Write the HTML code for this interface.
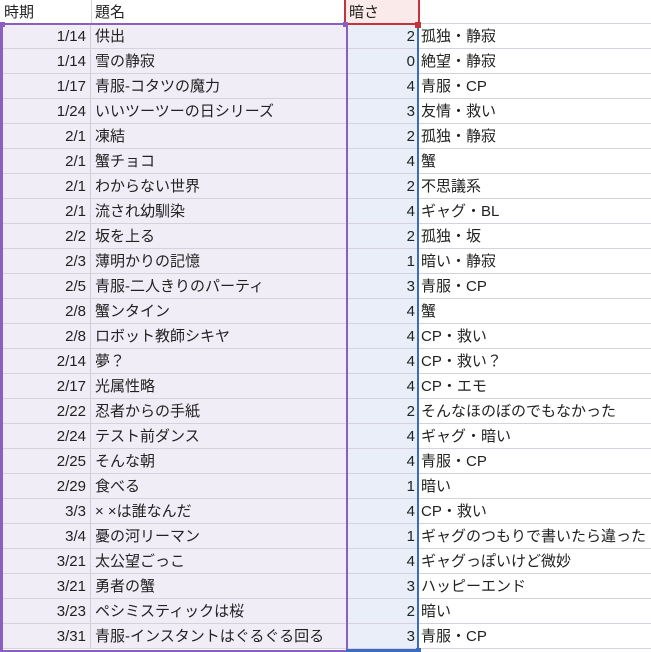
<!DOCTYPE html><html><head><meta charset="utf-8"><style>
*{margin:0;padding:0;box-sizing:border-box}
body{width:651px;height:652px;background:#fff;position:relative;overflow:hidden;font-family:"Liberation Sans","Noto Sans CJK JP",sans-serif;font-size:15px;color:#222}
.r{position:absolute;left:0;width:651px;height:25px;border-bottom:1px solid #d4d2dc}
.r div{position:absolute;top:0;height:24px;line-height:26px;white-space:nowrap;overflow:visible}
.a{left:0;width:91px;text-align:right;padding-right:4px;background:#f0edf6;border-right:1px solid #cfcbd8}
.b{left:91px;width:255px;padding-left:4px;background:#f0edf6}
.c{left:346px;width:72px;text-align:right;padding-right:3px;background:#e9eef8}
.d{left:419px;padding-left:2px}
</style></head><body>
<div style="position:absolute;left:0;top:0;width:651px;height:24px;border-bottom:1px solid #d4d2dc"></div>
<div style="position:absolute;left:91px;top:0;width:1px;height:24px;background:#d4d2dc"></div>
<div style="position:absolute;left:4px;top:0;line-height:26px">時期</div>
<div style="position:absolute;left:95px;top:0;line-height:26px">題名</div>
<div style="position:absolute;left:344px;top:0;width:76px;height:26px;background:#fbeaea;border:2px solid #c4343c;border-top:none"></div>
<div style="position:absolute;left:349px;top:0;line-height:26px">暗さ</div>
<div class="r" style="top:24px"><div class="a">1/14</div><div class="b">供出</div><div class="c">2</div><div class="d">孤独・静寂</div></div>
<div class="r" style="top:49px"><div class="a">1/14</div><div class="b">雪の静寂</div><div class="c">0</div><div class="d">絶望・静寂</div></div>
<div class="r" style="top:74px"><div class="a">1/17</div><div class="b">青服-コタツの魔力</div><div class="c">4</div><div class="d">青服・CP</div></div>
<div class="r" style="top:99px"><div class="a">1/24</div><div class="b">いいツーツーの日シリーズ</div><div class="c">3</div><div class="d">友情・救い</div></div>
<div class="r" style="top:124px"><div class="a">2/1</div><div class="b">凍結</div><div class="c">2</div><div class="d">孤独・静寂</div></div>
<div class="r" style="top:149px"><div class="a">2/1</div><div class="b">蟹チョコ</div><div class="c">4</div><div class="d">蟹</div></div>
<div class="r" style="top:174px"><div class="a">2/1</div><div class="b">わからない世界</div><div class="c">2</div><div class="d">不思議系</div></div>
<div class="r" style="top:199px"><div class="a">2/1</div><div class="b">流され幼馴染</div><div class="c">4</div><div class="d">ギャグ・BL</div></div>
<div class="r" style="top:224px"><div class="a">2/2</div><div class="b">坂を上る</div><div class="c">2</div><div class="d">孤独・坂</div></div>
<div class="r" style="top:249px"><div class="a">2/3</div><div class="b">薄明かりの記憶</div><div class="c">1</div><div class="d">暗い・静寂</div></div>
<div class="r" style="top:274px"><div class="a">2/5</div><div class="b">青服-二人きりのパーティ</div><div class="c">3</div><div class="d">青服・CP</div></div>
<div class="r" style="top:299px"><div class="a">2/8</div><div class="b">蟹ンタイン</div><div class="c">4</div><div class="d">蟹</div></div>
<div class="r" style="top:324px"><div class="a">2/8</div><div class="b">ロボット教師シキヤ</div><div class="c">4</div><div class="d">CP・救い</div></div>
<div class="r" style="top:349px"><div class="a">2/14</div><div class="b">夢？</div><div class="c">4</div><div class="d">CP・救い？</div></div>
<div class="r" style="top:374px"><div class="a">2/17</div><div class="b">光属性略</div><div class="c">4</div><div class="d">CP・エモ</div></div>
<div class="r" style="top:399px"><div class="a">2/22</div><div class="b">忍者からの手紙</div><div class="c">2</div><div class="d">そんなほのぼのでもなかった</div></div>
<div class="r" style="top:424px"><div class="a">2/24</div><div class="b">テスト前ダンス</div><div class="c">4</div><div class="d">ギャグ・暗い</div></div>
<div class="r" style="top:449px"><div class="a">2/25</div><div class="b">そんな朝</div><div class="c">4</div><div class="d">青服・CP</div></div>
<div class="r" style="top:474px"><div class="a">2/29</div><div class="b">食べる</div><div class="c">1</div><div class="d">暗い</div></div>
<div class="r" style="top:499px"><div class="a">3/3</div><div class="b">× ×は誰なんだ</div><div class="c">4</div><div class="d">CP・救い</div></div>
<div class="r" style="top:524px"><div class="a">3/4</div><div class="b">憂の河リーマン</div><div class="c">1</div><div class="d">ギャグのつもりで書いたら違った</div></div>
<div class="r" style="top:549px"><div class="a">3/21</div><div class="b">太公望ごっこ</div><div class="c">4</div><div class="d">ギャグっぽいけど微妙</div></div>
<div class="r" style="top:574px"><div class="a">3/21</div><div class="b">勇者の蟹</div><div class="c">3</div><div class="d">ハッピーエンド</div></div>
<div class="r" style="top:599px"><div class="a">3/23</div><div class="b">ペシミスティックは桜</div><div class="c">2</div><div class="d">暗い</div></div>
<div class="r" style="top:624px"><div class="a">3/31</div><div class="b">青服-インスタントはぐるぐる回る</div><div class="c">3</div><div class="d">青服・CP</div></div>
<div style="position:absolute;left:0;top:23px;width:348px;height:629px;border:2px solid #8b5fbf;border-left-width:3px"></div>
<div style="position:absolute;left:417px;top:25px;width:2px;height:627px;background:#3a6cc4"></div>
<div style="position:absolute;left:346px;top:649px;width:72px;height:3px;background:#3a6cc4"></div>
<div style="position:absolute;left:344px;top:23px;width:76px;height:2px;background:#c4343c"></div>
<div style="position:absolute;left:0;top:22px;width:5px;height:5px;background:#8b5fbf"></div>
<div style="position:absolute;left:343px;top:22px;width:5px;height:5px;background:#8b5fbf"></div>
<div style="position:absolute;left:415px;top:22px;width:6px;height:6px;background:#c4343c"></div>
<div style="position:absolute;left:416px;top:648px;width:5px;height:4px;background:#3a6cc4"></div>
</body></html>
